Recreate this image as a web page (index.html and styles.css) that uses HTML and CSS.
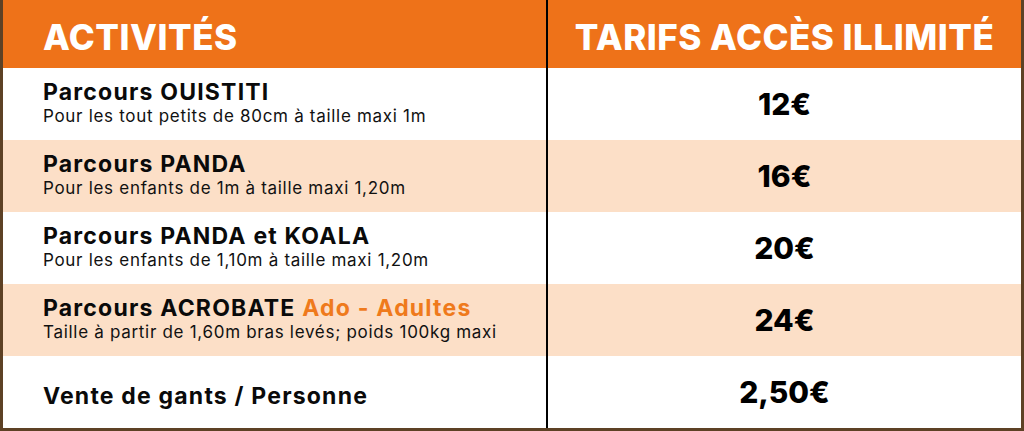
FILE: index.html
```html
<!DOCTYPE html>
<html lang="fr">
<head>
<meta charset="utf-8">
<title>Tarifs</title>
<link rel="stylesheet" href="styles.css">
</head>
<body>
<div class="table">
  <div class="cell head left"><span class="head-text">ACTIVITÉS</span></div>
  <div class="cell head right"><span class="head-text">TARIFS ACCÈS ILLIMITÉ</span></div>

  <div class="cell left"><div class="title">Parcours OUISTITI</div><div class="sub">Pour les tout petits de 80cm à taille maxi 1m</div></div>
  <div class="cell right"><span class="price">12€</span></div>

  <div class="cell left alt"><div class="title">Parcours PANDA</div><div class="sub">Pour les enfants de 1m à taille maxi 1,20m</div></div>
  <div class="cell right alt"><span class="price">16€</span></div>

  <div class="cell left"><div class="title">Parcours PANDA et KOALA</div><div class="sub">Pour les enfants de 1,10m à taille maxi 1,20m</div></div>
  <div class="cell right"><span class="price">20€</span></div>

  <div class="cell left alt"><div class="title">Parcours ACROBATE <span class="accent">Ado - Adultes</span></div><div class="sub">Taille à partir de 1,60m bras levés; poids 100kg maxi</div></div>
  <div class="cell right alt"><span class="price">24€</span></div>

  <div class="cell left last"><div class="title">Vente de gants / Personne</div></div>
  <div class="cell right"><span class="price">2,50€</span></div>
</div>
</body>
</html>
```
FILE: styles.css
```css
* { box-sizing: border-box; }
html, body { margin: 0; padding: 0; background: #ffffff; }
body { font-family: Inter, "Noto Sans", sans-serif; color: #0a0a0a; }

.table {
  width: 1024px;
  height: 431px;
  display: grid;
  grid-template-columns: 545px 473px;
  grid-template-rows: 68px repeat(5, 72px);
  border-left: 3px solid #5d4125;
  border-right: 3px solid #5d4125;
  border-bottom: 3px solid #5d4125;
  background: #ffffff;
}

.cell { display: flex; }
.left {
  border-right: 2px solid #000000;
  flex-direction: column;
  justify-content: center;
  padding-left: 40px;
  padding-bottom: 4px;
}
.right { align-items: center; justify-content: center; }
.alt { background: #fcdfc7; }

.head { background: #ee7219; }
.head.left { justify-content: center; padding-bottom: 0; }
.head-text {
  color: #ffffff;
  font-weight: 800;
  font-size: 35px;
  letter-spacing: 0.5px;
  line-height: 1;
  padding-top: 7px;
}

.title {
  font-weight: 700;
  font-size: 23px;
  line-height: 27px;
  letter-spacing: 1.2px;
  color: #0a0a0a;
}
.sub {
  font-weight: 400;
  font-size: 17px;
  line-height: 20px;
  letter-spacing: 0.7px;
  color: #111111;
}
.left.last { padding-top: 9px; padding-bottom: 0; }
.accent { color: #ef7a1c; }

.price {
  font-weight: 800;
  font-size: 30px;
  line-height: 1;
  color: #000000;
}
```
